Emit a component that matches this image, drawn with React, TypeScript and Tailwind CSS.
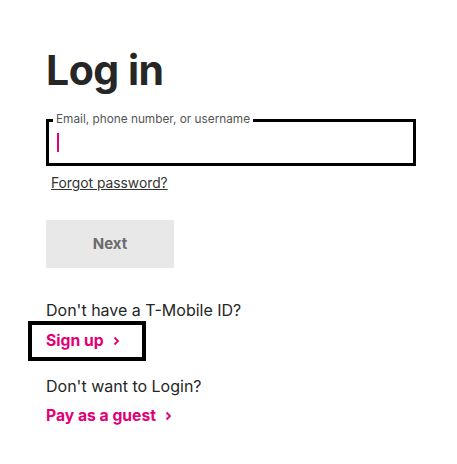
export default function App() {
  return (
    <div
      className="min-h-screen bg-white px-[46px] pt-[44px]"
      style={{ fontFamily: "Inter, 'Liberation Sans', sans-serif" }}
    >
      <h1 className="text-[41px] font-bold leading-[52px] tracking-[-0.5px] text-[#262626]">
        Log in
      </h1>

      {/* Username field */}
      <div className="relative mt-[23px] flex h-[47px] w-[370px] items-center border-[3px] border-black">
        <span className="absolute -top-[10px] left-[4px] bg-white px-[3px] text-[11.8px] leading-[14px] text-[#555]">
          Email, phone number, or username
        </span>
        <div className="ml-[8px] h-[19px] w-[2px] bg-[#e20074]" />
      </div>

      <a
        href="#"
        className="ml-[5px] mt-[8px] inline-block text-[13.8px] leading-[19px] text-[#333] underline"
      >
        Forgot password?
      </a>

      <button className="mt-[26px] block h-[48px] w-[128px] bg-[#e8e8e8] text-[15px] font-bold text-[#6b6b6b]">
        Next
      </button>

      <p className="mt-[31px] text-[16px] leading-[22px] text-[#262626]">
        Don't have a T-Mobile ID?
      </p>

      <a
        href="#"
        className="-ml-[18px] mt-0 flex h-[40px] w-[118px] items-center gap-[9px] border-[4px] border-black pl-[14px] text-[15.7px] font-bold text-[#e20074]"
      >
        Sign up
        <Chevron />
      </a>

      <p className="mt-[14px] text-[16px] leading-[22px] text-[#262626]">
        Don't want to Login?
      </p>

      <a
        href="#"
        className="mt-[9px] flex items-center gap-[9px] text-[15.7px] font-bold leading-[20px] text-[#e20074]"
      >
        Pay as a guest
        <Chevron />
      </a>
    </div>
  );
}

function Chevron() {
  return (
    <svg width="7" height="10" viewBox="0 0 7 10" fill="none">
      <path d="M1.5 1.5L5 5L1.5 8.5" stroke="#e20074" strokeWidth="1.8" />
    </svg>
  );
}
